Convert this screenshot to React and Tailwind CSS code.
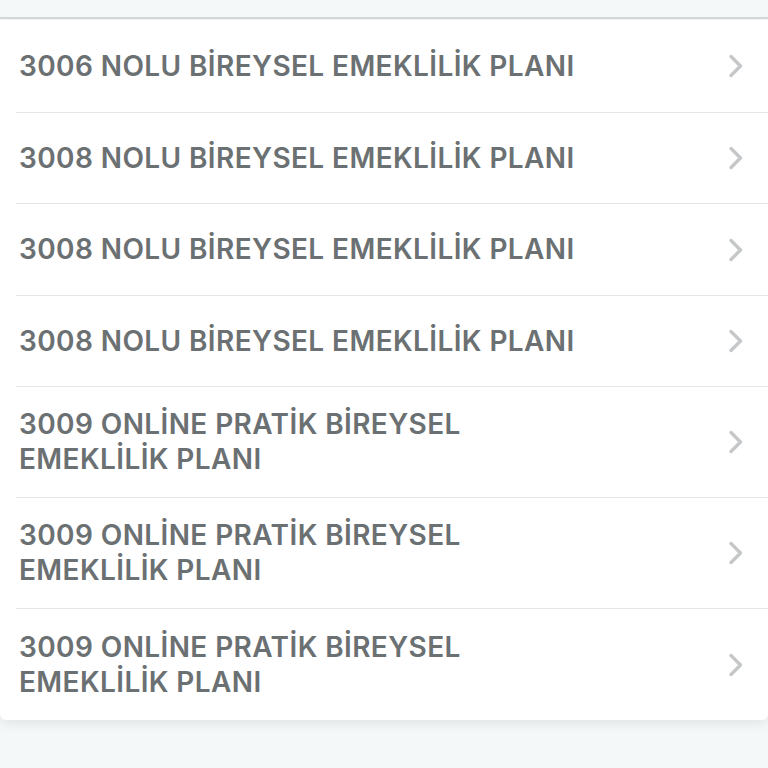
const plans = [
  { h: "h-[93px]", lines: ["3006 NOLU BİREYSEL EMEKLİLİK PLANI"] },
  { h: "h-[91px]", lines: ["3008 NOLU BİREYSEL EMEKLİLİK PLANI"] },
  { h: "h-[92px]", lines: ["3008 NOLU BİREYSEL EMEKLİLİK PLANI"] },
  { h: "h-[91px]", lines: ["3008 NOLU BİREYSEL EMEKLİLİK PLANI"] },
  { h: "h-[111px]", lines: ["3009 ONLİNE PRATİK BİREYSEL", "EMEKLİLİK PLANI"] },
  { h: "h-[111px]", lines: ["3009 ONLİNE PRATİK BİREYSEL", "EMEKLİLİK PLANI"] },
  { h: "h-[111px]", lines: ["3009 ONLİNE PRATİK BİREYSEL", "EMEKLİLİK PLANI"] },
];

const Chevron = () => (
  <svg width="22" height="26" viewBox="0 0 22 26" fill="none">
    <path
      d="M6 3.5 L15.5 13 L6 22.5"
      stroke="#c5c7c8"
      strokeWidth="3.4"
      strokeLinecap="round"
      strokeLinejoin="round"
    />
  </svg>
);

export default function App() {
  return (
    <div
      className="min-h-[768px] bg-[#f5f8f8] flex flex-col"
      style={{ fontFamily: "Inter, 'Liberation Sans', sans-serif" }}
    >
      <div className="h-[19px] bg-[#f5f8f8] border-b-2 border-[#d6d8d9]" />
      <div className="mt-[1px] bg-white rounded-b-md shadow-[0_4px_12px_rgba(0,0,0,0.08)]">
        {plans.map((p, i) => (
          <div key={i} className="pl-4">
            <div
              className={`flex items-center justify-between pr-[21px] ${p.h} ${
                i < plans.length - 1 ? "border-b border-[#e3e5e6]" : ""
              }`}
            >
              <div className="pl-[3px] text-[28px] leading-[35px] font-semibold text-[#6b7072] tracking-[0.4px]">
                {p.lines.map((l, j) => (
                  <div key={j}>{l}</div>
                ))}
              </div>
              <Chevron />
            </div>
          </div>
        ))}
      </div>
    </div>
  );
}
